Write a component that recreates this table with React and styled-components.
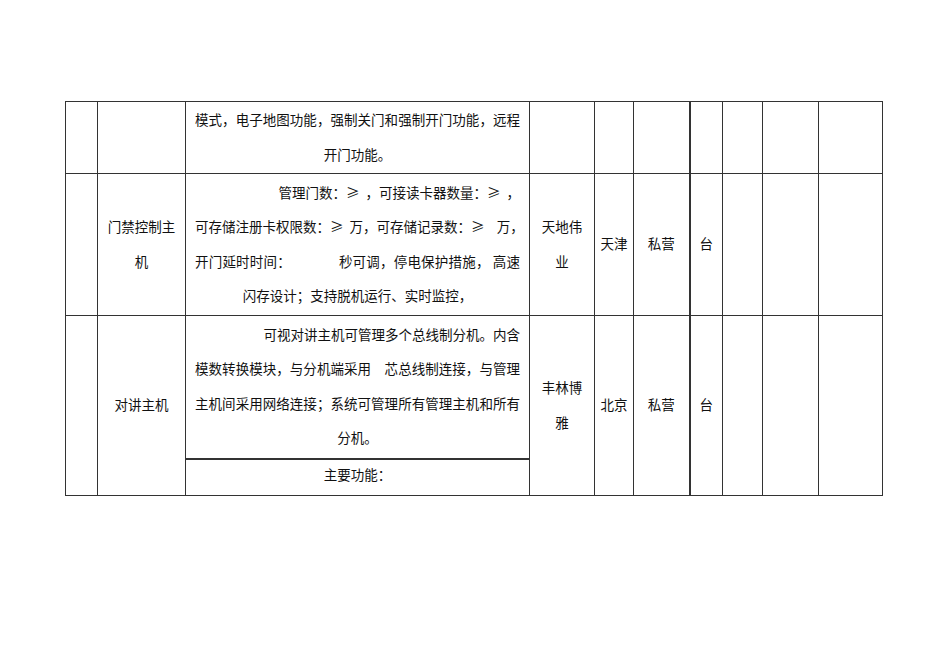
import React from 'react';
import styled, { createGlobalStyle } from 'styled-components';

const GlobalStyle = createGlobalStyle`
  html, body {
    margin: 0;
    padding: 0;
    background: #ffffff;
  }
  body {
    font-family: "Noto Sans CJK SC", "Noto Sans", sans-serif;
    color: #111;
  }
`;

const Page = styled.div`
  width: 950px;
  height: 672px;
  padding: 101px 0 0 65px;
  box-sizing: border-box;
`;

const Sheet = styled.table`
  border-collapse: collapse;
  table-layout: fixed;
  width: 818px;
  font-size: 13.5px;
  line-height: 34.5px;
`;

const Row = styled.tr`
  height: ${p => p.$h}px;
`;

const Cell = styled.td`
  border: 1px solid #333;
  border-left-width: ${p => (p.$thickLeft ? 2 : 1)}px;
  border-bottom-width: ${p => (p.$thickBottom ? 2 : 1)}px;
  padding: 0 ${p => p.$pad ?? 0}px ${p => (p.$flat ? 7 : 2)}px;
  line-height: ${p => (p.$flat ? '26px' : 'inherit')};
  text-align: center;
  vertical-align: middle;
  white-space: nowrap;
  overflow: hidden;
`;

const Line = styled.div`
  text-align: ${p => p.$align || 'center'};
  text-align-last: ${p => p.$align || 'center'};
  white-space: pre;
`;

const widths = [32, 88, 344, 65, 39, 56, 33, 40, 56, 64];

const rows = [
  {
    name: [],
    desc: [
      { t: '模式，电子地图功能，强制关门和强制开门功能，远程', a: 'justify' },
      { t: '开门功能。' },
    ],
    maker: [],
    place: '',
    kind: '',
    unit: '',
    h: 71,
  },
  {
    name: ['门禁控制主', '机'],
    desc: [
      { t: '管理门数：≥  ，可接读卡器数量：≥  ，', a: 'right' },
      { t: '可存储注册卡权限数：≥  万，可存储记录数：≥    万，', a: 'justify' },
      { t: '开门延时时间：　　　　秒可调，停电保护措施， 高速', a: 'justify' },
      { t: '闪存设计；支持脱机运行、实时监控，' },
    ],
    maker: ['天地伟', '业'],
    place: '天津',
    kind: '私营',
    unit: '台',
    h: 142,
  },
];

function Lines({ items }) {
  return items.map((l, i) => (
    <Line key={i} $align={l.a}>
      {l.t}
    </Line>
  ));
}

function Stack({ items }) {
  return items.map((t, i) => <Line key={i}>{t}</Line>);
}

export default function App() {
  return (
    <Page>
      <GlobalStyle />
      <Sheet>
        <colgroup>
          {widths.map((w, i) => (
            <col key={i} style={{ width: w }} />
          ))}
        </colgroup>
        <tbody>
          {rows.map((r, i) => (
            <Row key={i} $h={r.h}>
              <Cell />
              <Cell>
                <Stack items={r.name} />
              </Cell>
              <Cell $pad={9}>
                <Lines items={r.desc} />
              </Cell>
              <Cell>
                <Stack items={r.maker} />
              </Cell>
              <Cell>{r.place}</Cell>
              <Cell>{r.kind}</Cell>
              <Cell $thickLeft>{r.unit}</Cell>
              <Cell />
              <Cell />
              <Cell />
            </Row>
          ))}
          <Row $h={143}>
            <Cell rowSpan={2} />
            <Cell rowSpan={2}>对讲主机</Cell>
            <Cell $pad={9} $thickBottom>
              <Lines
                items={[
                  { t: '可视对讲主机可管理多个总线制分机。内含', a: 'right' },
                  { t: '模数转换模块，与分机端采用　芯总线制连接，与管理', a: 'justify' },
                  { t: '主机间采用网络连接；系统可管理所有管理主机和所有', a: 'justify' },
                  { t: '分机。' },
                ]}
              />
            </Cell>
            <Cell rowSpan={2}>
              <Stack items={['丰林博', '雅']} />
            </Cell>
            <Cell rowSpan={2}>北京</Cell>
            <Cell rowSpan={2}>私营</Cell>
            <Cell rowSpan={2} $thickLeft>台</Cell>
            <Cell rowSpan={2} />
            <Cell rowSpan={2} />
            <Cell rowSpan={2} />
          </Row>
          <Row $h={37}>
            <Cell $pad={9} $flat>主要功能：</Cell>
          </Row>
        </tbody>
      </Sheet>
    </Page>
  );
}
